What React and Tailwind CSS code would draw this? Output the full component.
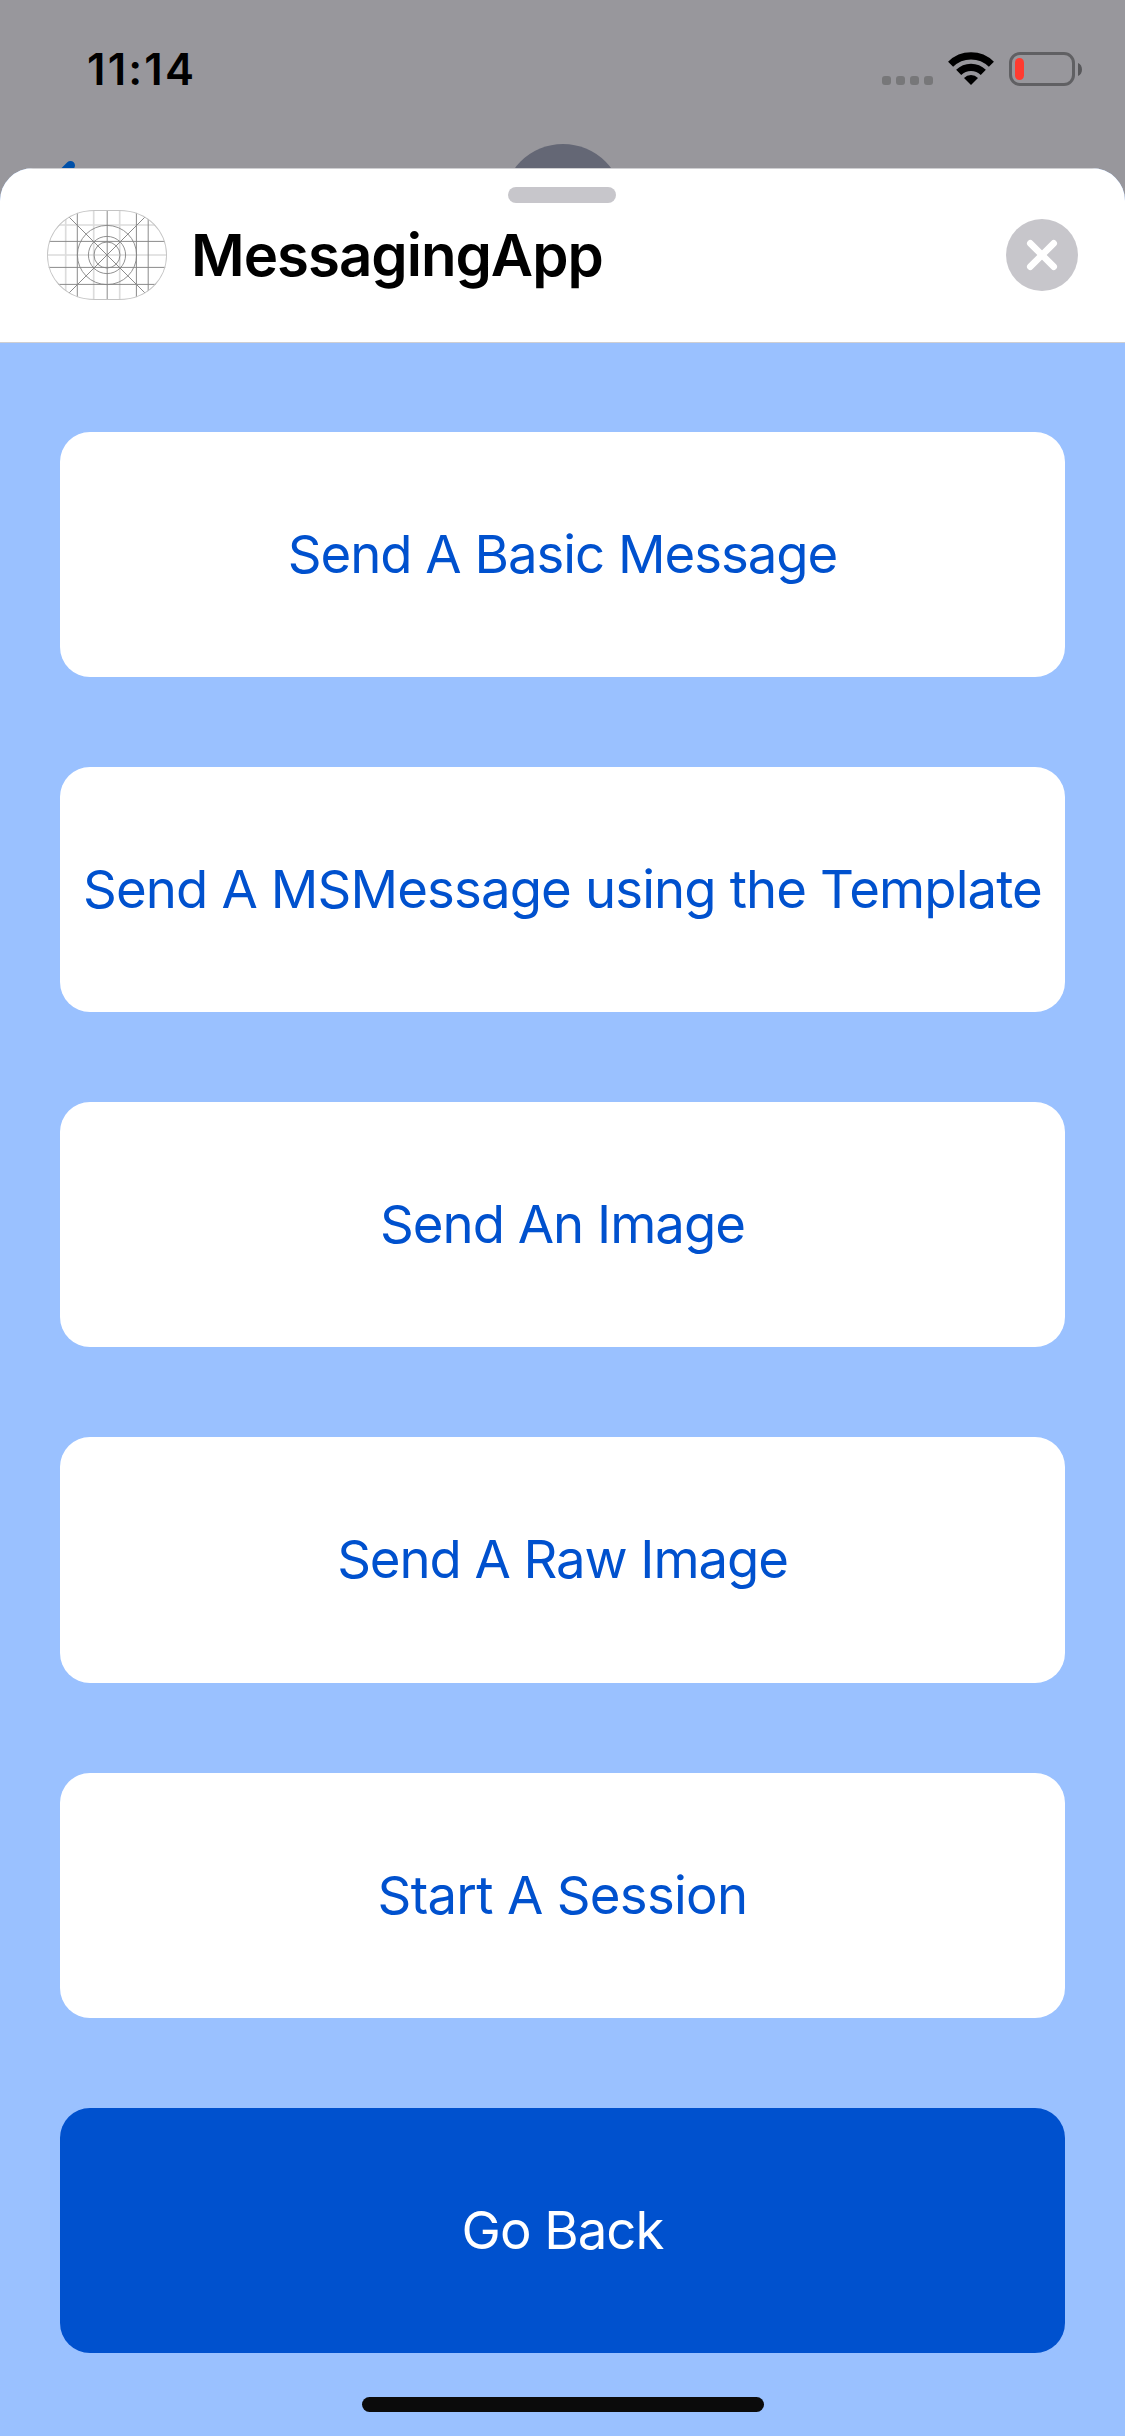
const FONT = "font-['Inter','Liberation_Sans',sans-serif]";

const actions = [
  { label: "Send A Basic Message", tracking: "tracking-[-1.02px]" },
  { label: "Send A MSMessage using the Template", tracking: "tracking-[-0.87px]" },
  { label: "Send An Image", tracking: "tracking-[-1px]" },
  { label: "Send A Raw Image", tracking: "tracking-[-1.08px]" },
  { label: "Start A Session", tracking: "tracking-[-0.7px]" },
  { label: "Go Back", tracking: "tracking-[-1px]", primary: true },
];

function Wifi() {
  return (
    <svg width="46" height="33" viewBox="0 0 46 33">
      <g fill="none" stroke="#000" strokeWidth="7.2">
        <path d="M2.6 12.2A29 29 0 0 1 43.4 12.2" />
        <path d="M10.7 20.4A17.4 17.4 0 0 1 35.3 20.4" />
      </g>
      <path d="M23 33L16 26A9.9 9.9 0 0 1 30 26Z" />
    </svg>
  );
}

function StatusBar() {
  return (
    <div className="flex h-[168px] items-start justify-between pl-[87px] pr-[43px]">
      <time className="mt-[44px] text-[43.6px] leading-[52px] font-semibold tracking-[2.2px]">11:14</time>
      <div className="mt-[52px] flex h-[34px] items-start">
        <div className="mt-6 flex gap-[5px]">
          {[0, 1, 2, 3].map((dot) => (
            <span key={dot} className="size-[9px] rounded-[3px] bg-[#777779]" />
          ))}
        </div>
        <div className="ml-[15px]">
          <Wifi />
        </div>
        <div className="ml-[15px] h-[34px] w-[66px] rounded-[11px] border-[3px] border-[#606063] p-[3px]">
          <div className="h-[22px] w-[9px] rounded-full bg-[#ff3b30]" />
        </div>
        <svg width="4" height="13" viewBox="0 0 4 13" className="mt-[10.5px] ml-[3px]">
          <path d="M0 0C5.3 1.8 5.3 11.2 0 13Z" fill="#58585b" />
        </svg>
      </div>
    </div>
  );
}

function AppIcon() {
  const outline = "M0 45C0 21 19 0 48 0H72C101 0 120 21 120 45S101 90 72 90H48C19 90 0 69 0 45Z";
  return (
    <svg width="120" height="90" viewBox="0 0 120 90" className="shrink-0">
      <clipPath id="icon-clip">
        <path d={outline} />
      </clipPath>
      <g clipPath="url(#icon-clip)" fill="none">
        <path
          d="M18.7 0V90M46.7 0V90M72.7 0V90M0 15H120M0 45H120"
          stroke="#dcdcdc"
          strokeWidth="1.7"
        />
        <path
          d="M30.3 0V90M60.2 0V90M89.4 0V90M101.2 0V90M0 31.4H120M0 57.4H120M0 74.4H120M15 0L105 90M105 0L15 90"
          stroke="#858585"
          strokeWidth="0.95"
        />
        <g stroke="#858585" strokeWidth="0.9">
          <circle cx="60" cy="45" r="29.6" />
          <circle cx="60" cy="45" r="18.6" />
          <circle cx="60" cy="45" r="13" />
        </g>
        <path d={outline} stroke="#c4c4c4" strokeWidth="1.8" />
      </g>
    </svg>
  );
}

function SheetHeader() {
  return (
    <header className="h-[175px] border-y border-[#cfcfd2] bg-white pt-[18px]">
      <div className="ml-[508px] h-4 w-[108px] rounded-full bg-[#c7c6cb]" />
      <div className="mt-[7px] flex h-[90px] items-center px-[47px]">
        <AppIcon />
        <h1 className="ml-[24px] text-[58.2px] leading-[70px] font-semibold tracking-[-1.02px]">MessagingApp</h1>
        <button aria-label="Close" className="ml-auto flex size-[72px] items-center justify-center rounded-full bg-[#c7c6cb]">
          <svg width="32" height="32" viewBox="-16 -16 32 32">
            <path d="M-11.7 -11.7L11.7 11.7M11.7 -11.7L-11.7 11.7" stroke="#fff" strokeWidth="6.6" strokeLinecap="round" />
          </svg>
        </button>
      </div>
    </header>
  );
}

function ActionButton({ label, tracking, primary }) {
  return (
    <button
      className={`flex-1 rounded-[30px] pb-px text-[52.7px] leading-[64px] whitespace-nowrap ${tracking} ${
        primary ? "bg-[#0051ce] text-white" : "bg-white text-[#0051ce]"
      }`}
    >
      {label}
    </button>
  );
}

export default function App() {
  return (
    <div className={`relative h-[2436px] w-[1125px] overflow-hidden bg-[#98979c] text-black ${FONT}`}>
      <svg width="30" height="30" className="absolute top-[155px] left-[50px]">
        <path d="M20.5 10.5L4 27" stroke="#0050a8" strokeWidth="9" strokeLinecap="round" />
      </svg>
      <div className="absolute top-[143.5px] left-[502.5px] size-[120px] rounded-full bg-[#646775]" />
      <StatusBar />
      <section className="relative flex h-[2268px] flex-col overflow-hidden rounded-t-[33px] bg-[#9ac1ff]">
        <SheetHeader />
        <main className="mt-[88.9px] flex h-[1921px] flex-col gap-[90px] px-[60px]">
          {actions.map((action) => (
            <ActionButton key={action.label} {...action} />
          ))}
        </main>
        <div className="mt-[44.1px] ml-[362px] h-[15px] w-[402px] rounded-full bg-[#0b0b0b]" />
      </section>
    </div>
  );
}
